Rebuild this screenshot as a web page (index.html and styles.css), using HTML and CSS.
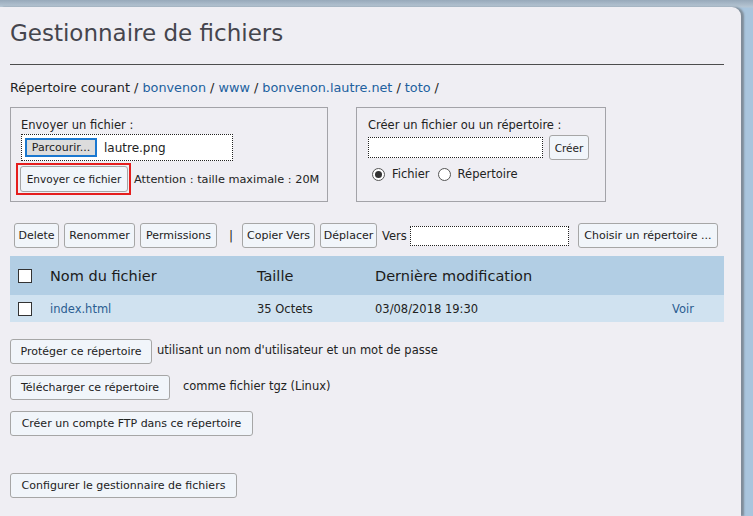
FILE: index.html
```html
<!DOCTYPE html>
<html lang="fr">
<head>
<meta charset="utf-8">
<title>Gestionnaire de fichiers</title>
<link rel="stylesheet" href="styles.css">
</head>
<body>
<div class="page">
  <h1 class="title">Gestionnaire de fichiers</h1>
  <hr class="rule">
  <div class="crumbs">Répertoire courant / <a href="#">bonvenon</a> / <a href="#">www</a> / <a href="#">bonvenon.lautre.net</a> / <a href="#">toto</a> /</div>

  <div class="boxes">
    <div class="box box-upload">
      <div class="label">Envoyer un fichier :</div>
      <div class="file">
        <span class="browse">Parcourir...</span>
        <span class="fname">lautre.png</span>
      </div>
      <div class="send-row">
        <span class="focus"><button class="btn">Envoyer ce fichier</button></span>
        <span class="note">Attention : taille maximale : 20M</span>
      </div>
    </div>
    <div class="box box-create">
      <div class="label">Créer un fichier ou un répertoire :</div>
      <div class="create-row">
        <span class="field field-create"></span>
        <button class="btn btn-create">Créer</button>
      </div>
      <div class="radios">
        <span class="radio on"></span><span class="rlabel">Fichier</span>
        <span class="radio"></span><span class="rlabel">Répertoire</span>
      </div>
    </div>
  </div>

  <div class="toolbar">
    <button class="btn tb w-del">Delete</button>
    <button class="btn tb w-ren">Renommer</button>
    <button class="btn tb w-perm">Permissions</button>
    <span class="sep">|</span>
    <button class="btn tb w-copy">Copier Vers</button>
    <button class="btn tb w-move">Déplacer</button>
    <span class="vers">Vers</span>
    <span class="field field-vers"></span>
    <button class="btn tb choose">Choisir un répertoire ...</button>
  </div>

  <div class="table">
    <div class="thead">
      <span class="cb"></span>
      <span class="c-name">Nom du fichier</span>
      <span class="c-size">Taille</span>
      <span class="c-date">Dernière modification</span>
    </div>
    <div class="trow">
      <span class="cb"></span>
      <a class="c-name" href="#">index.html</a>
      <span class="c-size">35 Octets</span>
      <span class="c-date">03/08/2018 19:30</span>
      <a class="c-view" href="#">Voir</a>
    </div>
  </div>

  <div class="actions">
    <div class="act"><button class="btn big w-prot">Protéger ce répertoire</button><span class="desc d1">utilisant un nom d'utilisateur et un mot de passe</span></div>
    <div class="act"><button class="btn big w-dl">Télécharger ce répertoire</button><span class="desc d2">comme fichier tgz (Linux)</span></div>
    <div class="act"><button class="btn big w-ftp">Créer un compte FTP dans ce répertoire</button></div>
    <div class="act last"><button class="btn big w-conf">Configurer le gestionnaire de fichiers</button></div>
  </div>
</div>
</body>
</html>
```
FILE: styles.css
```css
* { box-sizing: border-box; }
html, body { margin: 0; padding: 0; }
body {
  width: 753px;
  height: 516px;
  overflow: hidden;
  background: linear-gradient(to bottom, #97a9ba 0, #b7c6d4 7px, #a9c5dd 8px);
  font-family: "DejaVu Sans", Verdana, sans-serif;
  color: #222;
}
.page {
  margin-top: 7px;
  width: 741px;
  height: 509px;
  background: #efeef3;
  border-top-right-radius: 9px;
  box-shadow: 3px 0 2px #7f8c98;
  padding: 0 17px 0 10px;
}
.title {
  margin: 0;
  padding-top: 12px;
  font-size: 23px;
  font-weight: normal;
  color: #45454d;
  line-height: 28px;
}
.rule {
  margin: 17px 0 0 0;
  border: 0;
  border-top: 1px solid #4d4d4d;
  height: 0;
}
.crumbs {
  margin-top: 14px;
  font-size: 12.8px;
  line-height: 17px;
  color: #222;
}
.crumbs a { color: #21609e; text-decoration: none; }

.boxes {
  display: flex;
  gap: 28px;
  margin-top: 11px;
}
.box {
  border: 1px solid #a3a3a8;
  height: 95px;
  padding: 10px 0 0 10px;
  font-size: 11.5px;
  color: #222;
}
.box-upload { width: 318px; }
.box-create { width: 250px; padding-left: 11px; }
.label { line-height: 15px; }
.file {
  margin-top: 1px;
  width: 212px;
  height: 27px;
  background: #fff;
  border: 1px dotted #222;
  display: flex;
  align-items: center;
  padding-left: 3px;
}
.browse {
  display: inline-block;
  width: 72px;
  height: 19px;
  border: 2px solid #1a78d0;
  background: #dcdcdc;
  font-size: 11px;
  line-height: 15px;
  text-align: center;
  color: #222;
}
.fname { margin-left: 7px; font-size: 12px; }
.send-row {
  display: flex;
  align-items: center;
  margin-top: 2px;
  margin-left: -5px;
}
.focus {
  display: inline-block;
  border: 2px solid #e51d1d;
  padding: 1px 1px 1px 2px;
}
.btn {
  font-family: "DejaVu Sans", Verdana, sans-serif;
  font-size: 11px;
  color: #222;
  background: #f1f5fa;
  border: 1px solid #a6a6a6;
  border-radius: 3px;
  height: 25px;
  padding: 0;
  margin: 0;
  white-space: nowrap;
  text-align: center;
}
.focus .btn { height: 26px; width: 108px; font-size: 10.5px; }
.note { margin-left: 3px; font-size: 11.3px; white-space: nowrap; }

.create-row {
  display: flex;
  align-items: center;
  margin-top: 2px;
}
.field {
  display: inline-block;
  background: #fff;
  border: 1px dotted #222;
}
.field-create { width: 175px; height: 21px; }
.btn-create { margin-left: 6px; height: 25px; width: 40px; font-size: 10.5px; }
.radios {
  display: flex;
  align-items: center;
  margin-top: 7px;
  margin-left: 4px;
  font-size: 11.5px;
}
.radio {
  width: 13px; height: 13px;
  border: 1px solid #555;
  border-radius: 50%;
  background: #fff;
  position: relative;
}
.radio.on::after {
  content: "";
  position: absolute;
  left: 2px; top: 2px;
  width: 7px; height: 7px;
  border-radius: 50%;
  background: #333;
}
.rlabel { margin-left: 7px; margin-right: 8px; }

.toolbar {
  display: flex;
  align-items: center;
  margin-top: 21px;
  padding-left: 4px;
  height: 25px;
  font-size: 11.5px;
}
.tb { margin-right: 5px; height: 25px; }
.w-del { width: 45px; }
.w-ren { width: 71px; }
.w-perm { width: 77px; margin-right: 0; }
.w-copy { width: 73px; }
.w-move { width: 57px; }
.sep { margin: 0 9px 0 12px; font-size: 12px; color: #222; }
.vers { margin-right: 3px; }
.field-vers { width: 159px; height: 20px; }
.choose { margin-left: 9px; width: 140px; }

.table {
  margin-top: 8px;
  width: 714px;
}
.thead, .trow {
  display: flex;
  align-items: center;
}
.thead {
  height: 39px;
  background: #b2cee4;
  font-size: 14.5px;
  color: #1b1b1b;
}
.trow {
  height: 27px;
  background: #d0e2f0;
  font-size: 11.5px;
}
.cb {
  width: 14px; height: 14px;
  border: 1px solid #333;
  background: #fff;
  margin-left: 8px;
}
.thead .cb { margin-top: 1px; }
.c-name { margin-left: 18px; width: 207px; }
.trow .c-name { color: #2b5d91; text-decoration: none; }
.c-size { width: 118px; }
.c-date { width: 297px; }
.trow .c-view { color: #2b5d91; text-decoration: none; }

.actions { margin-top: 17px; }
.act {
  display: flex;
  align-items: center;
  height: 24px;
  margin-bottom: 12px;
}
.act.last { margin-top: 38px; }
.big { height: 25px; }
.w-prot { width: 142px; }
.w-dl { width: 160px; }
.w-ftp { width: 243px; }
.w-conf { width: 227px; }
.desc { font-size: 11.5px; }
.d1 { margin-left: 5px; margin-top: -3px; }
.d2 { margin-left: 13px; margin-top: -3px; }
```
